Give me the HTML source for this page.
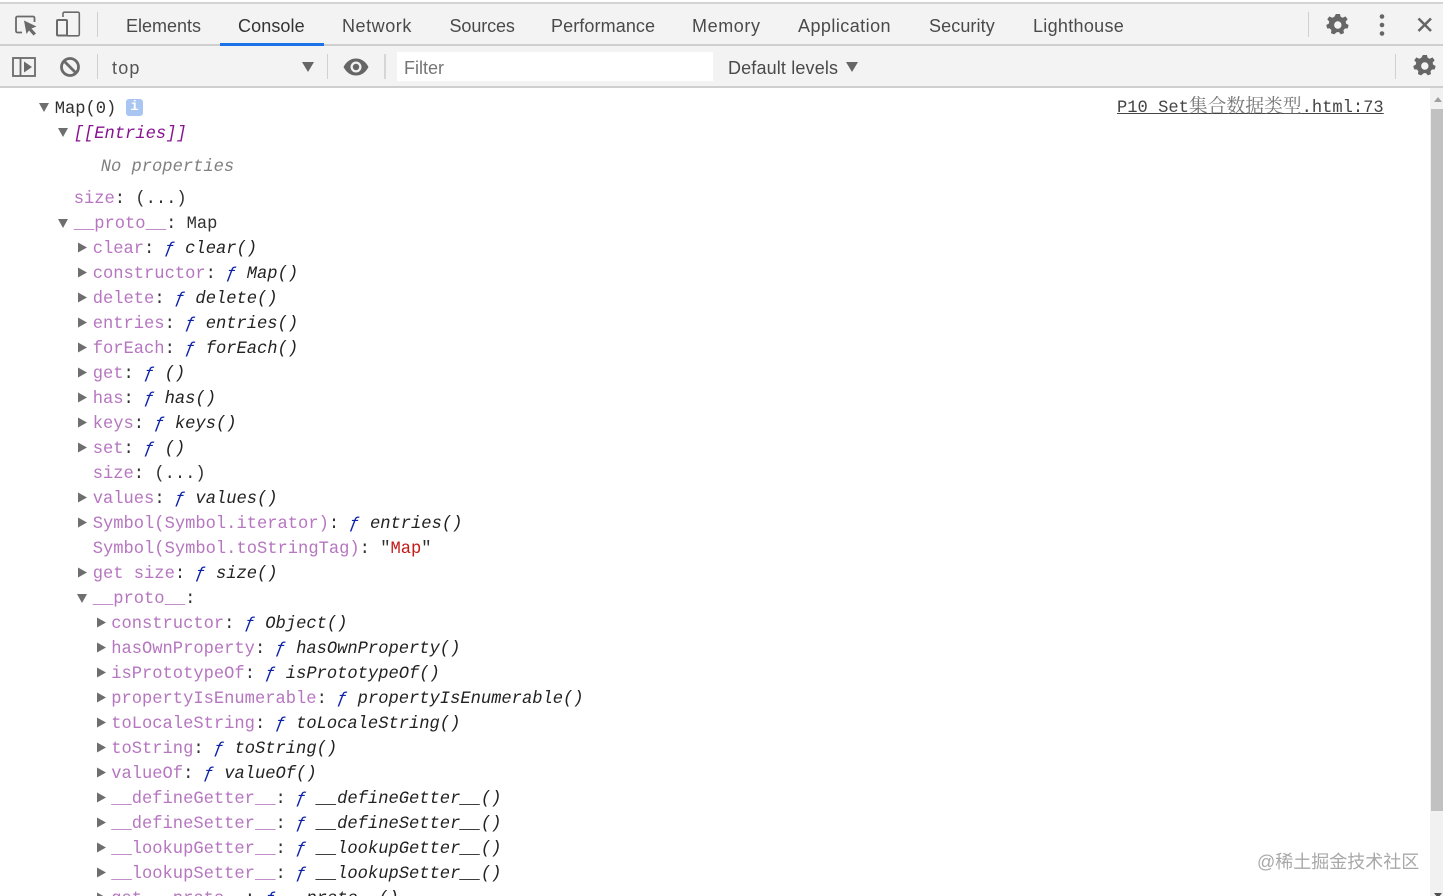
<!DOCTYPE html>
<html><head><meta charset="utf-8">
<style>
html,body{margin:0;padding:0;background:#fff;width:1443px;height:896px;overflow:hidden}
#w{position:relative;width:1443px;height:896px;overflow:hidden;font-family:"Liberation Sans",sans-serif}
.b{position:absolute}
.t{position:absolute;top:14px;line-height:24px;font-size:18px;color:#4a4a4a;white-space:nowrap}
.r{position:absolute;height:25px;line-height:25px;margin-top:2px;margin-left:-.3px;font-family:"Liberation Mono",monospace;font-size:17.13px;color:#303030;white-space:pre}
.k{color:#b676c0}
.f{color:#0d22aa;font-style:italic}
.i{font-style:italic;color:#222}
.ar,.ad{position:absolute;width:0;height:0}
.ar{border-left:9px solid #6e6e6e;border-top:5.5px solid transparent;border-bottom:5.5px solid transparent;transform:translateY(.5px)}
.ad{border-top:9px solid #6e6e6e;border-left:5.5px solid transparent;border-right:5.5px solid transparent}
svg{position:absolute;overflow:visible}
</style></head><body><div id="w">

<!-- toolbars -->
<div class="b" style="left:0;top:2px;width:1443px;height:2px;background:#d4d4d4"></div>
<div class="b" style="left:0;top:4px;width:1443px;height:40px;background:#f3f3f3"></div>
<div class="b" style="left:0;top:44px;width:1443px;height:2px;background:#cfcfcf"></div>
<div class="b" style="left:0;top:46px;width:1443px;height:40px;background:#f3f3f3"></div>
<div class="b" style="left:0;top:86px;width:1443px;height:2px;background:#cfcfcf"></div>
<div class="b" style="left:220px;top:43px;width:104px;height:3px;background:#1a73e8"></div>

<!-- top icons -->
<svg style="left:0;top:0" width="130" height="90" viewBox="0 0 130 90">
 <path d="M22 32.500H17.500a1.500 1.500 0 0 1-1.500-1.500V18a1.500 1.500 0 0 1 1.500-1.500H33a1.500 1.500 0 0 1 1.500 1.500v4" fill="none" stroke="#6a6a6a" stroke-width="1.800"/>
 <path d="M24 20.500L36.500 26.500 31.500 28.500 36 33.500 33.500 35.500 29 30.500 26.500 34z" fill="#6a6a6a"/>
 <path d="M63 17V13.500a1.300 1.300 0 0 1 1.300-1.300H78a1.300 1.300 0 0 1 1.300 1.300V34.500a1.300 1.300 0 0 1-1.300 1.300H67" fill="none" stroke="#6a6a6a" stroke-width="1.600"/>
 <rect x="57" y="20" width="10" height="15.500" rx="1" fill="none" stroke="#6a6a6a" stroke-width="2"/>
 <rect x="13" y="58" width="22" height="18" fill="none" stroke="#6a6a6a" stroke-width="1.800"/>
 <path d="M20.500 58V76" stroke="#6a6a6a" stroke-width="1.800"/>
 <path d="M24 61.500L32 67 24 72.500z" fill="#6a6a6a"/>
 <circle cx="70" cy="67" r="8.500" fill="none" stroke="#6a6a6a" stroke-width="2.800"/>
 <path d="M64 61L76 73" stroke="#6a6a6a" stroke-width="2.800"/>
</svg>
<div class="b" style="left:97px;top:12px;width:1px;height:25px;background:#d0d0d0"></div>
<div class="b" style="left:97px;top:54px;width:1px;height:25px;background:#d0d0d0"></div>

<div class="t" style="left:126px">Elements</div>
<div class="t" style="left:238px;color:#333;letter-spacing:.1px">Console</div>
<div class="t" style="left:342px;letter-spacing:.55px">Network</div>
<div class="t" style="left:449.500px;letter-spacing:-.1px">Sources</div>
<div class="t" style="left:551px;letter-spacing:.1px">Performance</div>
<div class="t" style="left:692px;letter-spacing:.6px">Memory</div>
<div class="t" style="left:798px;letter-spacing:.45px">Application</div>
<div class="t" style="left:929px;letter-spacing:.1px">Security</div>
<div class="t" style="left:1033px;letter-spacing:.3px">Lighthouse</div>

<!-- right top icons -->
<div class="b" style="left:1308px;top:12px;width:1px;height:25px;background:#d0d0d0"></div>
<div class="b" style="left:1395px;top:54px;width:1px;height:25px;background:#d0d0d0"></div>
<svg style="left:1326px;top:13px" width="24" height="24" viewBox="0 0 24 24">
 <path d="M12 1l2 0 .8 3 2.200 1 2.800-1.500 2.200 3-2 2.400.3 2.100 2.700 1.500-.8 3.500-3 .2-1.500 1.800.5 3-3.300 1.300-1.900-2.400h-2.200L7.900 22.300 4.600 21l.5-3-1.500-1.800-3-.2-.8-3.500 2.700-1.500.3-2.100-2-2.400 2.200-3 2.800 1.500 2.200-1L9.800 1z" transform="translate(.5 0) scale(.96)" fill="#666"/>
 <circle cx="11.800" cy="12" r="3.700" fill="#f3f3f3"/>
</svg>
<svg style="left:1413px;top:54px" width="24" height="24" viewBox="0 0 24 24">
 <path d="M12 1l2 0 .8 3 2.200 1 2.800-1.500 2.200 3-2 2.400.3 2.100 2.700 1.500-.8 3.500-3 .2-1.500 1.800.5 3-3.300 1.300-1.900-2.400h-2.200L7.900 22.300 4.600 21l.5-3-1.500-1.800-3-.2-.8-3.500 2.700-1.500.3-2.100-2-2.400 2.200-3 2.800 1.500 2.200-1L9.800 1z" transform="translate(.5 0) scale(.96)" fill="#666"/>
 <circle cx="11.800" cy="12" r="3.700" fill="#f3f3f3"/>
</svg>
<svg style="left:1370px;top:10px" width="70" height="30" viewBox="0 0 70 30">
 <circle cx="12" cy="6.500" r="2.300" fill="#666"/><circle cx="12" cy="15" r="2.300" fill="#666"/><circle cx="12" cy="23.500" r="2.300" fill="#666"/>
 <path d="M48.500 8.500L61 21M61 8.500L48.500 21" stroke="#666" stroke-width="2.600"/>
</svg>

<!-- second toolbar -->
<div class="t" style="left:112px;top:56px;color:#555;letter-spacing:1.2px">top</div>
<div class="b" style="left:302px;top:62px;width:0;height:0;border-top:10px solid #666;border-left:6px solid transparent;border-right:6px solid transparent"></div>
<div class="b" style="left:327px;top:54px;width:1px;height:25px;background:#d0d0d0"></div>
<svg style="left:343px;top:57px" width="26" height="20" viewBox="0 0 26 20">
 <path d="M0.500 10C4 3.500 8.500 1.500 13 1.500S22 3.500 25.500 10C22 16.500 17.500 18.500 13 18.500S4 16.500 .5 10z" fill="#666"/>
 <circle cx="13" cy="10" r="5.500" fill="#f3f3f3"/><circle cx="13" cy="10" r="3.200" fill="#666"/>
</svg>
<div class="b" style="left:384px;top:54px;width:2px;height:25px;background:#d6d6d6"></div>
<div class="b" style="left:397px;top:52px;width:316px;height:29px;background:#fff"></div>
<div class="t" style="left:404px;top:56px;color:#757575">Filter</div>
<div class="t" style="left:728px;top:56px;color:#4a4a4a;letter-spacing:.15px">Default levels</div>
<div class="b" style="left:846px;top:62px;width:0;height:0;border-top:10px solid #666;border-left:6px solid transparent;border-right:6px solid transparent"></div>

<!-- scrollbar -->
<div class="b" style="left:1430px;top:88px;width:13px;height:808px;background:#f1f1f1"></div>
<div class="b" style="left:1431px;top:109px;width:12px;height:702px;background:#c1c1c1"></div>
<div class="b" style="left:1434px;top:97px;width:0;height:0;border-bottom:5px solid #a0a0a0;border-left:4px solid transparent;border-right:4px solid transparent"></div>
<div class="b" style="left:1434px;top:893px;width:0;height:0;border-top:5px solid #505050;border-left:4px solid transparent;border-right:4px solid transparent"></div>

<!-- source link -->
<div class="r" style="left:1117.300px;top:90px;text-decoration:underline;color:#444">P10_Set<span style="font-family:'Noto Serif CJK SC',serif;font-size:18.800px;color:#777">集合数据类型</span>.html:73</div>

<!-- console -->
<div class="ad" style="left:39px;top:103px"></div>
<div class="r" style="left:55px;top:94.500px">Map(0)</div>
<div class="b" style="left:126px;top:99px;width:17px;height:17px;border-radius:3px;background:#a9c5f2;color:#fff;font:bold 14px/17px 'Liberation Mono',monospace;text-align:center">i</div>

<div class="ad" style="left:58px;top:128px"></div>
<div class="r i" style="left:74px;top:119.500px;color:#881391">[[Entries]]</div>
<div class="r i" style="left:101px;top:152.500px;color:#808080">No properties</div>
<div class="r" style="left:74px;top:184.500px"><span class="k">size</span>: (...)</div>
<div class="ad" style="left:58px;top:219px"></div>
<div class="r" style="left:74px;top:209.500px"><span class="k">__proto__</span>: Map</div>

<i class="ar" style="left:78px;top:241.500px"></i><div class="r" style="left:93px;top:234.500px"><span class="k">clear</span>: <span class="f">ƒ</span> <span class="i">clear()</span></div>
<i class="ar" style="left:78px;top:266.500px"></i><div class="r" style="left:93px;top:259.500px"><span class="k">constructor</span>: <span class="f">ƒ</span> <span class="i">Map()</span></div>
<i class="ar" style="left:78px;top:291.500px"></i><div class="r" style="left:93px;top:284.500px"><span class="k">delete</span>: <span class="f">ƒ</span> <span class="i">delete()</span></div>
<i class="ar" style="left:78px;top:316.500px"></i><div class="r" style="left:93px;top:309.500px"><span class="k">entries</span>: <span class="f">ƒ</span> <span class="i">entries()</span></div>
<i class="ar" style="left:78px;top:341.500px"></i><div class="r" style="left:93px;top:334.500px"><span class="k">forEach</span>: <span class="f">ƒ</span> <span class="i">forEach()</span></div>
<i class="ar" style="left:78px;top:366.500px"></i><div class="r" style="left:93px;top:359.500px"><span class="k">get</span>: <span class="f">ƒ</span> <span class="i">()</span></div>
<i class="ar" style="left:78px;top:391.500px"></i><div class="r" style="left:93px;top:384.500px"><span class="k">has</span>: <span class="f">ƒ</span> <span class="i">has()</span></div>
<i class="ar" style="left:78px;top:416.500px"></i><div class="r" style="left:93px;top:409.500px"><span class="k">keys</span>: <span class="f">ƒ</span> <span class="i">keys()</span></div>
<i class="ar" style="left:78px;top:441.500px"></i><div class="r" style="left:93px;top:434.500px"><span class="k">set</span>: <span class="f">ƒ</span> <span class="i">()</span></div>
<div class="r" style="left:93px;top:459.500px"><span class="k">size</span>: (...)</div>
<i class="ar" style="left:78px;top:491.500px"></i><div class="r" style="left:93px;top:484.500px"><span class="k">values</span>: <span class="f">ƒ</span> <span class="i">values()</span></div>
<i class="ar" style="left:78px;top:516.500px"></i><div class="r" style="left:93px;top:509.500px"><span class="k">Symbol(Symbol.iterator)</span>: <span class="f">ƒ</span> <span class="i">entries()</span></div>
<div class="r" style="left:93px;top:534.500px"><span class="k">Symbol(Symbol.toStringTag)</span>: "<span style="color:#c41a16">Map</span>"</div>
<i class="ar" style="left:78px;top:566.500px"></i><div class="r" style="left:93px;top:559.500px"><span class="k">get size</span>: <span class="f">ƒ</span> <span class="i">size()</span></div>
<i class="ad" style="left:77px;top:594px"></i><div class="r" style="left:93px;top:584.500px"><span class="k">__proto__</span>:</div>

<i class="ar" style="left:97px;top:616.500px"></i><div class="r" style="left:111.500px;top:609.500px"><span class="k">constructor</span>: <span class="f">ƒ</span> <span class="i">Object()</span></div>
<i class="ar" style="left:97px;top:641.500px"></i><div class="r" style="left:111.500px;top:634.500px"><span class="k">hasOwnProperty</span>: <span class="f">ƒ</span> <span class="i">hasOwnProperty()</span></div>
<i class="ar" style="left:97px;top:666.500px"></i><div class="r" style="left:111.500px;top:659.500px"><span class="k">isPrototypeOf</span>: <span class="f">ƒ</span> <span class="i">isPrototypeOf()</span></div>
<i class="ar" style="left:97px;top:691.500px"></i><div class="r" style="left:111.500px;top:684.500px"><span class="k">propertyIsEnumerable</span>: <span class="f">ƒ</span> <span class="i">propertyIsEnumerable()</span></div>
<i class="ar" style="left:97px;top:716.500px"></i><div class="r" style="left:111.500px;top:709.500px"><span class="k">toLocaleString</span>: <span class="f">ƒ</span> <span class="i">toLocaleString()</span></div>
<i class="ar" style="left:97px;top:741.500px"></i><div class="r" style="left:111.500px;top:734.500px"><span class="k">toString</span>: <span class="f">ƒ</span> <span class="i">toString()</span></div>
<i class="ar" style="left:97px;top:766.500px"></i><div class="r" style="left:111.500px;top:759.500px"><span class="k">valueOf</span>: <span class="f">ƒ</span> <span class="i">valueOf()</span></div>
<i class="ar" style="left:97px;top:791.500px"></i><div class="r" style="left:111.500px;top:784.500px"><span class="k">__defineGetter__</span>: <span class="f">ƒ</span> <span class="i">__defineGetter__()</span></div>
<i class="ar" style="left:97px;top:816.500px"></i><div class="r" style="left:111.500px;top:809.500px"><span class="k">__defineSetter__</span>: <span class="f">ƒ</span> <span class="i">__defineSetter__()</span></div>
<i class="ar" style="left:97px;top:841.500px"></i><div class="r" style="left:111.500px;top:834.500px"><span class="k">__lookupGetter__</span>: <span class="f">ƒ</span> <span class="i">__lookupGetter__()</span></div>
<i class="ar" style="left:97px;top:866.500px"></i><div class="r" style="left:111.500px;top:859.500px"><span class="k">__lookupSetter__</span>: <span class="f">ƒ</span> <span class="i">__lookupSetter__()</span></div>
<i class="ar" style="left:97px;top:891.500px"></i><div class="r" style="left:111.500px;top:884.500px"><span class="k">get __proto__</span>: <span class="f">ƒ</span> <span class="i">__proto__()</span></div>

<!-- watermark -->
<div class="b" style="left:1257px;top:851px;line-height:23px;font-size:18px;color:#a8a8a8;white-space:nowrap;font-family:'Liberation Sans','Noto Sans CJK SC',sans-serif">@稀土掘金技术社区</div>

</div></body></html>
